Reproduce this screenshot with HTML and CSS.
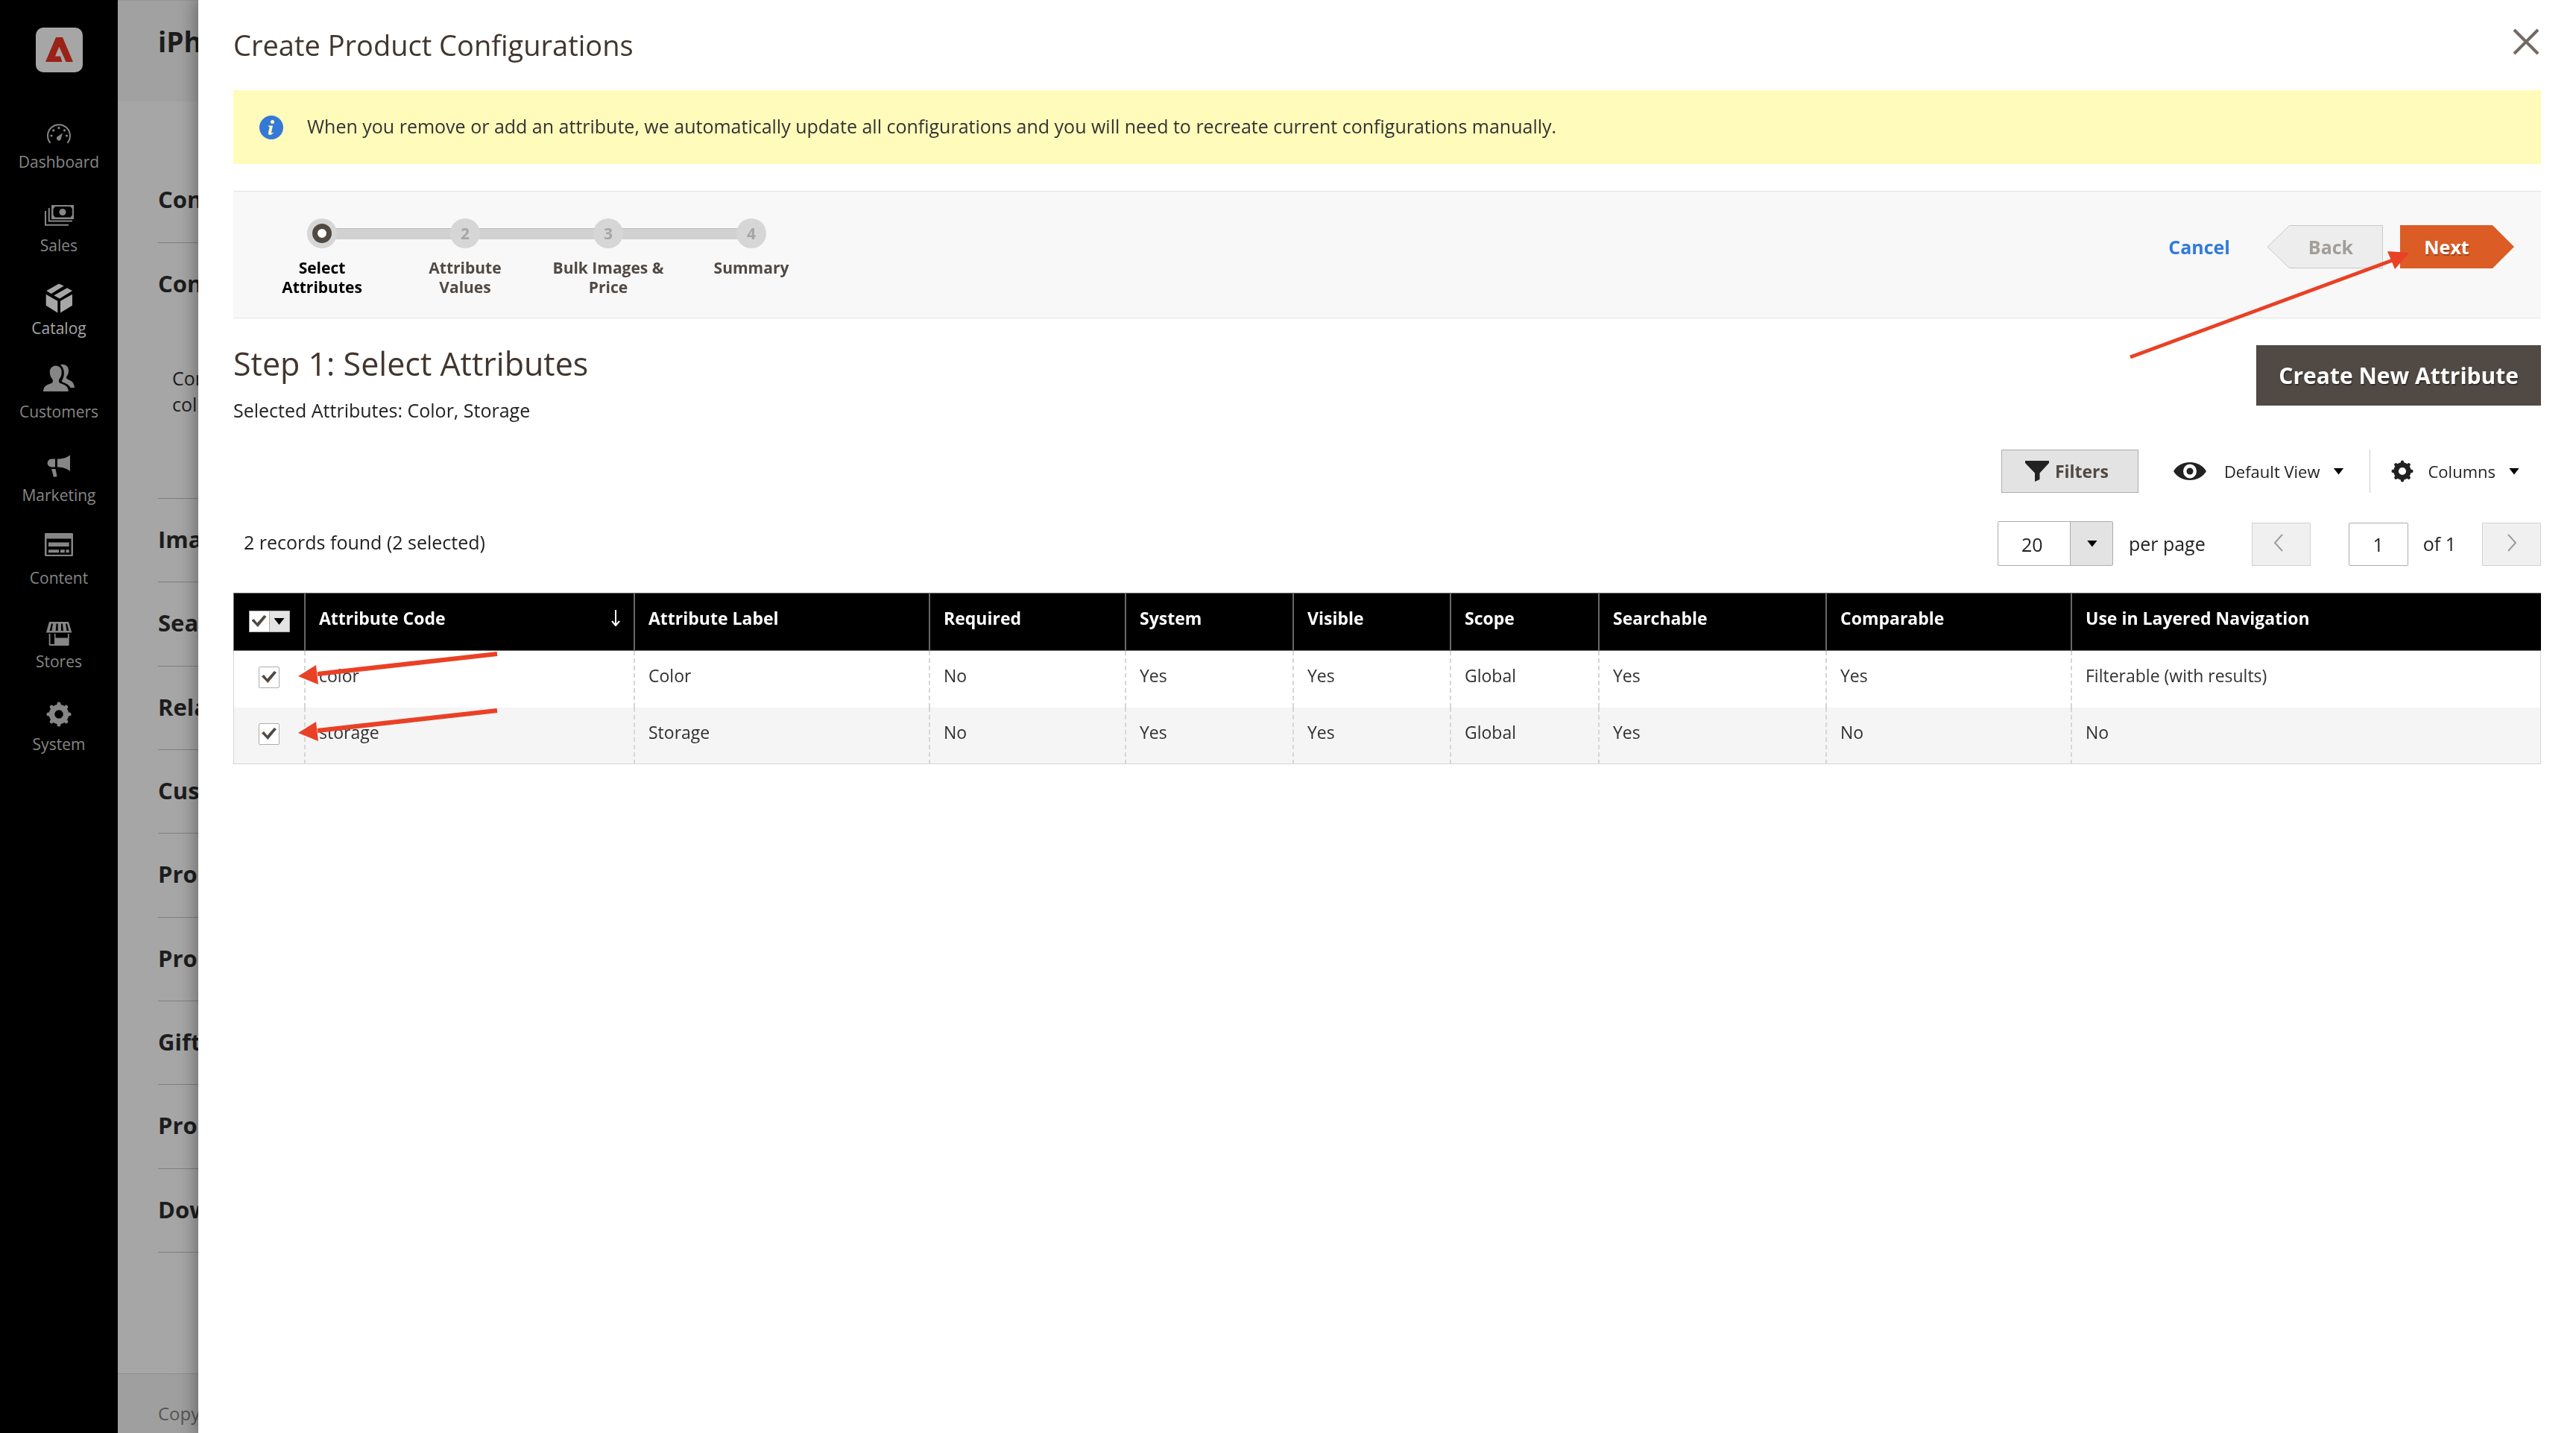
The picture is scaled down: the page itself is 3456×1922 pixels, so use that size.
FILE: index.html
```html
<!DOCTYPE html>
<html lang="en">
<head>
<meta charset="utf-8">
<title>Create Product Configurations</title>
<link rel="stylesheet" href="styles.css">
</head>
<body>
<div class="app">
  <nav class="menu" aria-label="Main menu">
    <a class="logo" href="#" aria-label="Home">
      <svg viewBox="0 0 63 60" width="63" height="60"><rect width="63" height="60" rx="10" fill="#a6a6a6"/><path fill="#9a2318" d="M13 46 27 13h9l14 33h-9.500L31.300 25.500 26 38.500h7l2.500 7.500z"/></svg>
    </a>
    <ul class="menu-list">
      <li><a href="#"><svg viewBox="0 0 44 48"><path d="M10.500 38.800A15 15 0 1 1 33.500 38.800" fill="none" stroke="currentColor" stroke-width="2"/><g fill="currentColor"><circle cx="12" cy="29" r="1.600"/><circle cx="14.700" cy="21.800" r="1.600"/><circle cx="22" cy="18.600" r="1.600"/><circle cx="29.500" cy="21.800" r="1.600"/><circle cx="32.500" cy="29" r="1.600"/><path d="M26.800 25.500 24.800 33.500A3 3 0 1 1 20 30.300z"/></g></svg>Dashboard</a></li>
      <li><a href="#"><svg viewBox="0 0 44 48"><path fill="currentColor" fill-rule="evenodd" d="M12 10h30v19H12zM17 12l-2.500 3v8.500l2.500 3h20.500l2.500-3V15l-2.500-3z"/><circle cx="27" cy="19.500" r="4.500" fill="currentColor"/><path fill="none" stroke="currentColor" stroke-width="2" d="M8.800 14v17.600H40M4 18v18.800h31"/></svg>Sales</a></li>
      <li class="active"><a href="#"><svg viewBox="0 0 44 48"><path fill="currentColor" d="M5.300 14.100 22 4.500l6.700 2.900L11.700 18zM15.300 20.200 33 10.200l7 3.900-17 10.400zM4.700 18.800l15.600 8.900v15.700L4.700 33.800zM24 27.700l16-8.900v15l-16 9.600z"/></svg>Catalog</a></li>
      <li><a href="#"><svg viewBox="0 0 44 48"><path fill="currentColor" d="M17.700 2.500c5 0 8 3.600 8 8.700 0 4.500-1.700 7.500-3.700 9.800v2.800c0 1.200 1 2 3 2.700 6 2 9.500 4 9.800 10.500H1c.3-6.500 3.800-8.500 9.800-10.500 2-.7 3-1.500 3-2.700V21c-2.200-2.300-4-5.300-4-9.800 0-5.100 3-8.700 7.900-8.700z"/><path fill="currentColor" d="M24 1c7-1.500 11 2.500 11 8 0 3.500-1 6-2.800 8.200-.6 1.200-.2 2.300 1.300 3.200l4 2c3.500 1.800 5.200 5 5.500 9.600h-5.500c-2-4-5.500-5.500-10.500-7.500-1.300-.6-1.400-1.600-.7-2.500 3.500-6 4.200-15-2.300-21z"/></svg>Customers</a></li>
      <li><a href="#"><svg viewBox="0 0 44 48"><path fill="currentColor" d="M17 15.600v10.800h-5a5.400 5.400 0 0 1 0-10.800zM20 15.600c7 0 13-2 17-5V32c-4-3.500-10-5.600-17-5.600zM12 29h5.500l2 10-4.500 1z"/></svg>Marketing</a></li>
      <li><a href="#"><svg viewBox="0 0 44 48"><path fill="currentColor" fill-rule="evenodd" d="M4 4h36l1 1v29l-1 1H4l-1-1V5zM5.500 11.500v21.500h33V11.500z"/><path fill="currentColor" d="M8 16.500h27.700V22H8zM8 26.200h14v4H8zM24 26.200h5.800v4H24zM31.500 26.200h4.200v4h-4.200z"/></svg>Content</a></li>
      <li><a href="#"><svg viewBox="0 0 44 48"><path fill="currentColor" fill-rule="evenodd" d="M9 11h26l4.300 14.500H5zM12 13.500l-2.500 9.500h3l1.500-9.500zM18.500 13.500l-.8 9.500h3v-9.500zM25 13.500v9.500h3l-1-9.500zM31 13.500l1.500 9.500h3L33 13.500z"/><path fill="currentColor" fill-rule="evenodd" d="M8.700 27h1.800v14h5.500V27h1.500v5.500H34V27h1.700v15l-1 1h-25l-1-1z"/></svg>Stores</a></li>
      <li><a href="#"><svg viewBox="0 0 44 48"><use href="#gear"/></svg>System</a></li>
    </ul>
  </nav>

  <main class="page">
    <header class="page-head"><h1>iPh</h1></header>
    <div class="page-body">
      <section class="fold first"><h2>Con</h2></section>
      <section class="fold open"><h2>Con</h2><p>Con<br>col</p></section>
      <div class="folds">
        <section class="fold"><h2>Ima</h2></section>
        <section class="fold"><h2>Sea</h2></section>
        <section class="fold"><h2>Rela</h2></section>
        <section class="fold"><h2>Cus</h2></section>
        <section class="fold"><h2>Pro</h2></section>
        <section class="fold"><h2>Pro</h2></section>
        <section class="fold"><h2>Gift</h2></section>
        <section class="fold"><h2>Pro</h2></section>
        <section class="fold"><h2>Dow</h2></section>
      </div>
    </div>
    <footer class="page-foot">Copy</footer>
  </main>
</div>

<div class="modal" role="dialog" aria-labelledby="modal-title">
  <header class="modal-head">
    <h1 id="modal-title">Create Product Configurations</h1>
    <button class="close" type="button" aria-label="Close"><svg viewBox="0 0 36 36" width="36" height="36"><path d="M2 2l32 32M34 2 2 34" fill="none" stroke="#736963" stroke-width="4"/></svg></button>
  </header>

  <div class="notice">
    <svg viewBox="0 0 32 32" width="32" height="32"><circle cx="16" cy="16" r="16" fill="#3579d8"/><circle cx="17.500" cy="8.500" r="2.500" fill="#fffbbb"/><path d="M12 13.500h6l-2 9.500q0 1.300 2.500-.5l.5.800q-3 3-5.500 2.600-2-.5-1.500-3l1.700-8H12z" fill="#fffbbb"/></svg>
    <p>When you remove or add an attribute, we automatically update all configurations and you will need to recreate current configurations manually.</p>
  </div>

  <div class="wizard">
    <ol class="steps">
      <li class="current"><span class="dot"></span>Select Attributes</li>
      <li><span class="dot">2</span>Attribute Values</li>
      <li><span class="dot">3</span>Bulk Images &amp; Price</li>
      <li><span class="dot">4</span>Summary</li>
    </ol>
    <div class="wizard-actions">
      <button class="cancel" type="button">Cancel</button>
      <button class="back" type="button" disabled><svg viewBox="0 0 156 58" width="156" height="58"><path d="M30.500.5h125v57h-125L1 29z" fill="#ededed" stroke="#c9c9c9"/></svg><span>Back</span></button>
      <div class="next-wrap">
        <button class="next" type="button">Next</button>
        <svg class="pointer next-pointer" viewBox="0 0 380 150" width="380" height="150"><path d="M3 145 355 15" stroke="#ea4025" stroke-width="5"/><path d="M348 3 377 5 358 27z" fill="#ea4025"/></svg>
      </div>
    </div>
  </div>

  <div class="step-head">
    <div>
      <h2>Step 1: Select Attributes</h2>
      <p>Selected Attributes: Color, Storage</p>
    </div>
    <button class="create" type="button">Create New Attribute</button>
  </div>

  <div class="toolbar">
    <button class="filters" type="button"><svg viewBox="0 0 32 28" width="32" height="28"><path d="M0 0h32v3L19.500 16.500V25L13 28V16.500L0 3z" fill="#222"/></svg>Filters</button>
    <button class="tool view" type="button"><svg viewBox="0 0 44 24" width="44" height="24"><path fill="#222" fill-rule="evenodd" d="M0 12C9-4 35-4 44 12 35 28 9 28 0 12zM22 2.500a9 9.500 0 1 0 0 19 9 9.500 0 1 0 0-19z"/><circle cx="22" cy="12" r="4.500" fill="#222"/></svg>Default View<i class="caret"></i></button>
    <button class="tool columns" type="button"><svg viewBox="5 7 34 34" width="30" height="30"><use href="#gear"/></svg>Columns<i class="caret"></i></button>
  </div>

  <div class="pager-row">
    <p class="found">2 records found (2 selected)</p>
    <div class="pager">
      <div class="size"><select id="size"><option>20</option></select><i class="caret"></i></div>
      <label class="per" for="size">per page</label>
      <button class="step-btn prev" type="button" disabled aria-label="Previous"><svg viewBox="0 0 14 24" width="14" height="24"><path d="M12 1 2 12l10 11" fill="none" stroke="#a09b98" stroke-width="2"/></svg></button>
      <input class="num" id="num" type="text" value="1">
      <label class="of" for="num">of 1</label>
      <button class="step-btn" type="button" disabled aria-label="Next page"><svg viewBox="0 0 14 24" width="14" height="24"><path d="M2 1l10 11L2 23" fill="none" stroke="#a09b98" stroke-width="2"/></svg></button>
    </div>
  </div>

  <table class="grid">
    <colgroup><col class="c1"><col class="c2"><col class="c3"><col class="c4"><col class="c5"><col class="c6"><col class="c7"><col class="c8"><col class="c9"><col></colgroup>
    <thead>
      <tr>
        <th class="pick"><span class="multi"><input type="checkbox" checked aria-label="Select all"><button type="button" aria-label="Selection options"><i class="caret"></i></button></span></th>
        <th><span class="sorted">Attribute Code<svg viewBox="0 0 12 22" width="12" height="22"><path d="M6 0v20M1 15l5 6 5-6" fill="none" stroke="#fff" stroke-width="2"/></svg></span></th>
        <th>Attribute Label</th><th>Required</th><th>System</th><th>Visible</th><th>Scope</th><th>Searchable</th><th>Comparable</th><th>Use in Layered Navigation</th>
      </tr>
    </thead>
    <tbody>
      <tr>
        <td class="pick"><input type="checkbox" checked aria-label="Select color"></td>
        <td class="code">color<svg class="pointer row-pointer" viewBox="0 0 270 46" width="270" height="46"><path d="M26 31 267 4" stroke="#ea4025" stroke-width="6"/><path d="M0 34 24 19 27 45z" fill="#ea4025"/></svg></td>
        <td>Color</td><td>No</td><td>Yes</td><td>Yes</td><td>Global</td><td>Yes</td><td>Yes</td><td>Filterable (with results)</td>
      </tr>
      <tr>
        <td class="pick"><input type="checkbox" checked aria-label="Select storage"></td>
        <td class="code">storage<svg class="pointer row-pointer" viewBox="0 0 270 46" width="270" height="46"><path d="M26 31 267 4" stroke="#ea4025" stroke-width="6"/><path d="M0 34 24 19 27 45z" fill="#ea4025"/></svg></td>
        <td>Storage</td><td>No</td><td>Yes</td><td>Yes</td><td>Global</td><td>Yes</td><td>No</td><td>No</td>
      </tr>
    </tbody>
  </table>
</div>

<svg class="defs" aria-hidden="true">
  <defs>
    <g id="gear" fill="none" stroke="currentColor">
      <circle cx="22" cy="24" r="9.500" stroke-width="7.500"/>
      <path stroke-width="5" stroke-linecap="round" d="M22 13V10M22 35v3M11 24H8M33 24h3M14.200 16.200l-2-2M29.800 16.200l2-2M14.200 31.800l-2 2M29.800 31.800l2 2"/>
    </g>
  </defs>
</svg>
</body>
</html>
```

FILE: styles.css
```css
* {
  box-sizing: border-box;
}

body {
  margin: 0;
  font-family: "Open Sans", sans-serif;
  font-size: 25px;
  line-height: 34px;
  color: #222;
  background: #fff;
}

h1, h2, p, ol, ul {
  margin: 0;
  padding: 0;
}

ol, ul {
  list-style: none;
}

button, input, select {
  margin: 0;
  padding: 0;
  border: 0;
  border-radius: 0;
  background: none;
  font: inherit;
  color: inherit;
  appearance: none;
}

svg {
  display: block;
  flex: none;
}

.defs {
  position: absolute;
  width: 0;
  height: 0;
}

.app {
  display: flex;
  height: 100vh;
  overflow: hidden;
}

/* Sidebar */
.menu {
  flex: none;
  width: 158px;
  padding-top: 37px;
  background: #000;
}

.logo {
  display: flex;
  justify-content: center;
}

.menu-list {
  display: grid;
  grid-auto-rows: 1fr;
  height: 893px;
  margin-top: 56px;
}

.menu-list a {
  display: flex;
  flex-direction: column;
  align-items: center;
  font-size: 21px;
  line-height: 32px;
  color: #868686;
  text-decoration: none;
}

.menu-list svg {
  width: 44px;
  height: 48px;
}

.menu-list .active a {
  color: #a6a6a6;
}

/* Page behind the dialog */
.page {
  flex: 1;
  display: flex;
  flex-direction: column;
  background: #a6a6a6;
  color: #1d1d1d;
}

.page-head {
  height: 136px;
  padding: 30px 54px;
  border-top: 1px solid #969696;
  background: #a1a1a1;
}

.page-head h1 {
  font-size: 37px;
  line-height: 50px;
}

.page-body {
  flex: 1;
  padding: 77px 54px 0;
}

.fold {
  padding-top: 33px;
  border-bottom: 1px solid #808080;
}

.fold h2 {
  font-size: 31px;
  line-height: 42px;
}

.fold.first {
  height: 113px;
}

.fold.open {
  height: 343px;
}

.fold.open p {
  margin-top: 89px;
  padding-left: 19px;
  line-height: 35px;
}

.folds {
  display: grid;
  grid-auto-rows: 1fr;
  height: 1011px;
}

.page-foot {
  height: 80px;
  padding: 36px 54px 0;
  border-top: 1px solid #8f8f8f;
  background: #9f9f9f;
  font-size: 24px;
  color: #555;
}

/* Dialog */
.modal {
  position: fixed;
  inset: 0 0 0 266px;
  padding: 0 47px;
  overflow: auto;
  background: #fff;
  box-shadow: 0 0 22px 4px rgba(0, 0, 0, 0.35);
}

.modal-head {
  display: flex;
  justify-content: space-between;
  align-items: flex-start;
  height: 121px;
  padding-top: 32px;
}

.modal-head h1 {
  font-size: 38px;
  line-height: 56px;
  font-weight: 400;
  color: #41362f;
}

.close {
  margin: 6px 2px 0 0;
}

.notice {
  display: flex;
  align-items: center;
  gap: 32px;
  height: 99px;
  padding: 0 35px;
  background: #fffbbb;
  color: #333;
}

.notice p {
  padding-bottom: 3px;
}

.wizard {
  display: flex;
  justify-content: space-between;
  margin-top: 36px;
  padding: 36px 36px 28px 23px;
  border: solid #e3e3e3;
  border-width: 1px 0;
  background: #f8f8f8;
}

.steps {
  display: flex;
}

.steps li {
  position: relative;
  display: flex;
  flex-direction: column;
  align-items: center;
  gap: 13px;
  width: 192px;
  padding: 0 16px;
  font-size: 21px;
  line-height: 26px;
  font-weight: 700;
  text-align: center;
  color: #514943;
}

.steps li + li::before {
  content: "";
  position: absolute;
  top: 13px;
  right: 50%;
  width: 100%;
  height: 14px;
  border-top: 1px solid #bebebe;
  background: #d1d1d1;
}

.steps .current {
  color: #000;
}

.dot {
  position: relative;
  z-index: 1;
  width: 40px;
  height: 40px;
  border-radius: 50%;
  background: #d6d6d6;
  line-height: 40px;
  color: #a6a6a6;
}

.current .dot::after {
  content: "";
  position: absolute;
  inset: 7px;
  border: 7px solid #514943;
  border-radius: 50%;
  background: #fff;
}

.wizard-actions {
  display: flex;
  align-items: flex-start;
  padding-top: 9px;
  line-height: 58px;
  font-weight: 700;
}

.cancel {
  margin-right: 49px;
  color: #2f7bdc;
}

.back {
  position: relative;
  width: 156px;
  height: 58px;
  padding-left: 16px;
  color: #a39e99;
}

.back svg {
  position: absolute;
  inset: 0;
}

.back span {
  position: relative;
}

.next-wrap {
  position: relative;
  margin-left: 23px;
}

.next {
  display: block;
  width: 153px;
  height: 58px;
  padding-right: 28px;
  background: #dc5c26;
  clip-path: polygon(0 0, 124px 0, 100% 50%, 124px 100%, 0 100%);
  color: #fff;
  text-shadow: 1px 2px 1px rgba(0, 0, 0, 0.3);
}

.pointer {
  position: absolute;
  pointer-events: none;
}

.next-pointer {
  top: 32px;
  right: 138px;
}

.step-head {
  display: flex;
  justify-content: space-between;
  align-items: flex-start;
  padding-top: 32px;
}

.step-head h2 {
  font-size: 43px;
  line-height: 58px;
  font-weight: 400;
  color: #41362f;
}

.step-head p {
  margin-top: 16px;
}

.create {
  height: 81px;
  margin-top: 4px;
  padding: 0 30px;
  background: #514943;
  font-size: 30px;
  font-weight: 700;
  color: #fff;
  text-shadow: 1px 2px 1px rgba(0, 0, 0, 0.4);
}

.caret {
  width: 14px;
  height: 9px;
  background: #000;
  clip-path: polygon(0 0, 100% 0, 50% 100%);
}

.toolbar {
  display: flex;
  justify-content: flex-end;
  height: 58px;
  margin-top: 36px;
  font-size: 22px;
}

.toolbar button {
  display: flex;
  align-items: center;
}

.toolbar .filters {
  gap: 8px;
  width: 184px;
  padding-left: 31px;
  border: 1px solid #adadad;
  background: #e3e3e3;
  font-size: 23px;
  font-weight: 700;
  color: #514943;
}

.tool .caret {
  margin-left: 18px;
}

.view {
  padding: 0 34px 0 47px;
}

.view svg {
  margin-right: 24px;
}

.columns {
  padding: 0 29px 0 28px;
  border-left: 1px solid #ccc;
}

.columns svg {
  margin-right: 20px;
}

.pager-row {
  display: flex;
  justify-content: space-between;
  height: 60px;
  margin-top: 38px;
  line-height: 60px;
}

.found {
  padding-left: 14px;
  line-height: 56px;
}

.pager {
  display: flex;
  align-items: flex-end;
}

.size {
  position: relative;
  display: flex;
  align-items: center;
  width: 155px;
  height: 60px;
  border: 1px solid #adadad;
  border-radius: 2px;
  background: linear-gradient(to right, #fff 96px, #adadad 96px, #adadad 97px, #e3e3e3 97px);
}

.size select {
  width: 100%;
  height: 100%;
  padding-left: 31px;
}

.size .caret {
  position: absolute;
  right: 20px;
}

.per {
  margin: 0 62px 0 21px;
}

.step-btn {
  display: flex;
  align-items: center;
  justify-content: center;
  width: 79px;
  height: 58px;
  padding-bottom: 4px;
  border: 1px solid #d1d1d1;
  background: #f0f0f0;
}

.prev {
  margin-right: 51px;
  padding-right: 6px;
}

.num {
  width: 80px;
  height: 58px;
  border: 1px solid #adadad;
  border-radius: 2px;
  text-align: center;
}

.of {
  margin: 0 35px 0 20px;
}

/* Attribute table */
.grid {
  width: 100%;
  margin-top: 36px;
  border-collapse: separate;
  border-spacing: 0;
  table-layout: fixed;
  font-size: 23px;
  line-height: 32px;
  color: #303030;
}

.c1 { width: 95px; }
.c2 { width: 442px; }
.c3 { width: 396px; }
.c4 { width: 263px; }
.c5 { width: 225px; }
.c6 { width: 211px; }
.c7 { width: 199px; }
.c8 { width: 305px; }
.c9 { width: 329px; }

.grid th, .grid td {
  height: 76px;
  padding: 17px 18px 0;
  vertical-align: top;
  text-align: left;
}

.grid th {
  height: 78px;
  border: 1px solid #696666;
  border-width: 1px 0 1px 2px;
  background: #000;
  color: #fff;
}

.grid td {
  border-left: 2px dashed #d6d6d6;
}

.grid tr:last-child td {
  border-bottom: 1px solid #d6d6d6;
}

.grid tr > :first-child {
  border-left-width: 1px;
  border-left-style: solid;
}

.grid td:last-child {
  border-right: 1px solid #d6d6d6;
}

.grid tbody tr:nth-child(even) {
  background: #f5f5f5;
}

.grid .pick {
  padding: 21px 0 0;
}

.grid th.pick {
  padding-top: 23px;
}

.sorted {
  display: flex;
  align-items: center;
  justify-content: space-between;
}

.code {
  position: relative;
}

.row-pointer {
  top: 0;
  left: -10px;
}

input[type="checkbox"] {
  display: block;
  width: 28px;
  height: 29px;
  margin: 0 auto;
  border: 1px solid #adadad;
  border-radius: 2px;
  background: #fff;
}

input[type="checkbox"]:checked::before {
  content: "";
  display: block;
  width: 20px;
  height: 16px;
  margin: 5px 3px;
  background: #514943;
  clip-path: polygon(0 45%, 15% 32%, 38% 66%, 84% 0, 100% 12%, 42% 100%);
}

.multi {
  display: flex;
  width: 55px;
  margin: 0 auto;
}

.multi input[type="checkbox"] {
  flex: none;
  margin: 0;
  border-radius: 0;
}

.multi button {
  display: flex;
  align-items: center;
  justify-content: center;
  width: 27px;
  height: 29px;
  border: 1px solid #adadad;
  border-left: 0;
  background: #e3e3e3;
}
```
